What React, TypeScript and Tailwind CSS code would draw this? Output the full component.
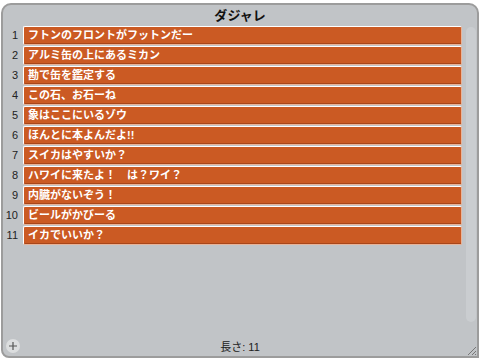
import * as React from "react";

const items = [
  "フトンのフロントがフットンだー",
  "アルミ缶の上にあるミカン",
  "勘で缶を鑑定する",
  "この石、お石ーね",
  "象はここにいるゾウ",
  "ほんとに本よんだよ!!",
  "スイカはやすいか？",
  "ハワイに来たよ！　は？ワイ？",
  "内臓がないぞう！",
  "ビールがかびーる",
  "イカでいいか？",
];

export default function App() {
  return (
    <div
      className="w-[480px] h-[360px] bg-white pt-[3px] pl-[1px] pr-[1px] pb-[2px]"
      style={{ fontFamily: '"Liberation Sans", "Noto Sans CJK JP", sans-serif' }}
    >
      <div className="relative flex h-full flex-col rounded-t-[10px] rounded-bl-[8px] border-2 border-[#9c9c9c] bg-[#c1c4c7]">
        {/* title */}
        <div className="h-[20px] pt-[1px] text-center text-[13px] font-bold leading-[20px] text-[#111]">
          ダジャレ
        </div>

        <div className="flex flex-1 gap-[4px] pr-[1px]">
          {/* list */}
          <div className="flex flex-1 flex-col gap-[1px] pt-[1px]">
            {items.map((t, i) => (
              <div key={i} className="flex h-[19px] items-center">
                <div className="w-[20px] pr-[5px] text-right text-[11px] text-[#222]">{i + 1}</div>
                <div className="flex h-[19px] flex-1 items-center rounded-[2px] border border-white border-b-[#e8b49a] border-r-[#e8b49a] bg-[#cb5a23] pl-[4px] text-[11px] font-bold text-white shadow-[inset_0_-1px_0_#a8461a]">
                  {t}
                </div>
              </div>
            ))}
          </div>
          {/* scrollbar track */}
          <div className="mt-[2px] mb-[16px] w-[10px] shrink-0 rounded-[5px] bg-[#cacdd0]" />
        </div>

        {/* footer */}
        <div className="relative flex h-[18px] items-center justify-center">
          <div className="absolute left-[3px] top-[1px] flex h-[14px] w-[14px] items-center justify-center rounded-full bg-[#dcdedf]">
            <svg width="10" height="10" viewBox="0 0 10 10">
              <path d="M5 1v8M1 5h8" stroke="#555" strokeWidth="1.2" />
            </svg>
          </div>
          <span className="text-[11px] text-[#222]">長さ: 11</span>
          <svg className="absolute right-0 bottom-0" width="12" height="12" viewBox="0 0 12 12">
            <path d="M11 3L3 11M11 7L7 11M11 10L10 11" stroke="#777" strokeWidth="1" />
          </svg>
        </div>
      </div>
    </div>
  );
}
